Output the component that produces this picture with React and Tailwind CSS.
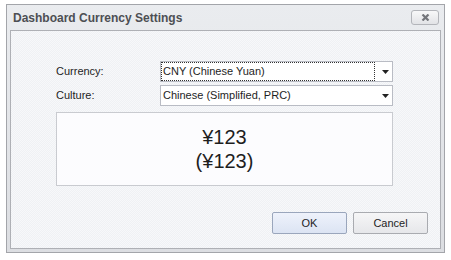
import React from 'react';

const font = { fontFamily: '"Liberation Sans", Arial, sans-serif' };

function Arrow() {
  return (
    <svg width="7" height="4" viewBox="0 0 7 4" className="block">
      <path d="M0 0h7L3.5 4z" fill="#222" />
    </svg>
  );
}

function Combo({ value, focused }) {
  return (
    <div className="flex h-[21px] w-[233px] items-center border border-[#b9bcc4] bg-white">
      <div
        className={
          'ml-px flex h-[17px] w-[212px] items-center pl-px text-[11px] text-[#1e1e1e] ' +
          (focused ? 'outline-1 outline-dotted outline-[#333]' : '')
        }
      >
        {value}
      </div>
      <div className="flex flex-1 items-center justify-center pl-[4px]">
        <Arrow />
      </div>
    </div>
  );
}

function Button({ children, primary }) {
  return (
    <button
      type="button"
      className={
        'h-[22px] w-[75px] rounded-[2px] border text-[11px] text-[#1e1e1e] ' +
        (primary
          ? 'border-[#9aa6bc] bg-gradient-to-b from-[#eef2fb] to-[#dce4f3]'
          : 'border-[#a9abb0] bg-gradient-to-b from-[#f6f6f7] to-[#e6e7ea]')
      }
    >
      {children}
    </button>
  );
}

export default function App() {
  return (
    <div className="h-[260px] w-[451px] bg-white pl-[6px] pt-[4px]" style={font}>
      <div className="flex h-[249px] w-[439px] flex-col border border-[#a3a5aa] bg-gradient-to-b from-[#eaecef] to-[#dcdee2]">
        <div className="flex h-[25px] items-center justify-between pl-[6px] pr-[5px]">
          <span className="text-[12px] font-bold text-[#4d4f53]">Dashboard Currency Settings</span>
          <div className="flex h-[15px] w-[28px] items-center justify-center rounded-[3px] border border-[#b3b5ba] bg-gradient-to-b from-[#f8f8f9] to-[#e2e3e6]">
            <svg width="9" height="7" viewBox="0 0 9 7">
              <path d="M1.5 0.5l6 6M7.5 0.5l-6 6" stroke="#74767b" strokeWidth="2.2" />
            </svg>
          </div>
        </div>
        <div className="mx-[3px] mb-[3px] flex flex-1 flex-col border border-[#aeb0b5] bg-[repeating-conic-gradient(#eff1f4_0_25%,#f7f8fa_0_50%)] bg-[length:2px_2px] pl-[45px] pr-[12px] pt-[30px]">
          <div className="flex items-center">
            <span className="w-[104px] text-[11px] text-[#1e1e1e]">Currency:</span>
            <Combo value="CNY (Chinese Yuan)" focused />
          </div>
          <div className="mt-[3px] flex items-center">
            <span className="w-[104px] text-[11px] text-[#1e1e1e]">Culture:</span>
            <Combo value="Chinese (Simplified, PRC)" />
          </div>
          <div className="mt-[6px] flex h-[74px] w-[337px] flex-col items-center justify-center border border-[#c9cbd0] bg-[#fcfcfe] text-[20px] leading-[24px] text-[#1e1e1e]">
            <div>¥123</div>
            <div>(¥123)</div>
          </div>
          <div className="mt-[26px] flex justify-end gap-[6px]">
            <Button primary>OK</Button>
            <Button>Cancel</Button>
          </div>
        </div>
      </div>
    </div>
  );
}
